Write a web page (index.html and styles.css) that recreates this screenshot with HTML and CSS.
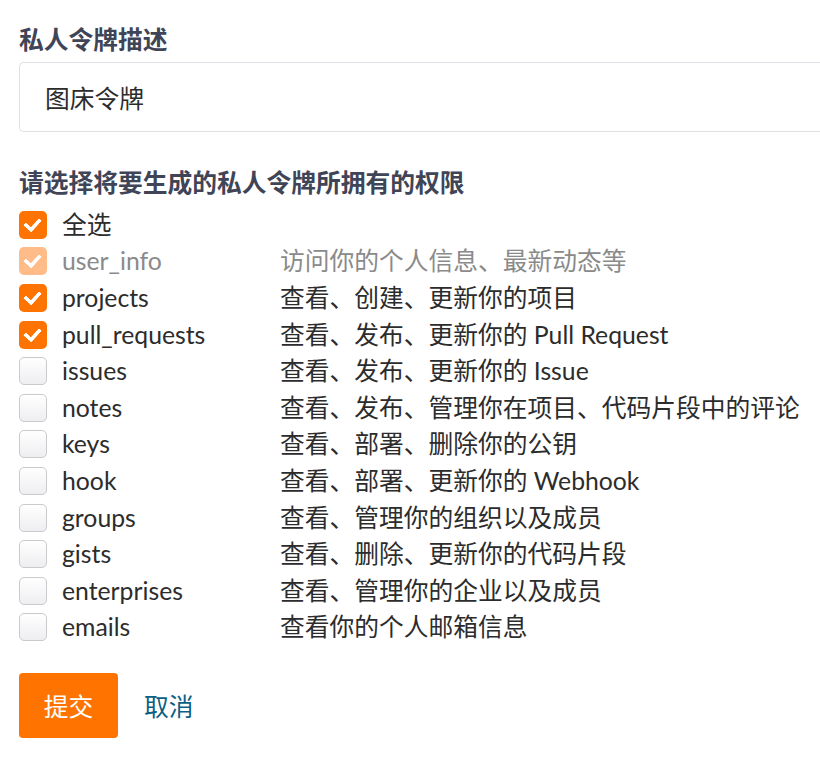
FILE: index.html
```html
<!DOCTYPE html>
<html lang="zh-CN">
<head>
<meta charset="utf-8">
<link rel="stylesheet" href="styles.css">
</head>
<body>
<form class="form">
  <label class="field-title">私人令牌描述</label>
  <input class="text-input" type="text" value="图床令牌">
  <div class="field-title second">请选择将要生成的私人令牌所拥有的权限</div>
  <div class="perm-list">
    <div class="perm-row"><span class="box checked"></span><span class="name all">全选</span></div>
    <div class="perm-row disabled"><span class="box checked"></span><span class="name">user_info</span><span class="desc">访问你的个人信息、最新动态等</span></div>
    <div class="perm-row"><span class="box checked"></span><span class="name">projects</span><span class="desc">查看、创建、更新你的项目</span></div>
    <div class="perm-row"><span class="box checked"></span><span class="name">pull_requests</span><span class="desc">查看、发布、更新你的 Pull Request</span></div>
    <div class="perm-row"><span class="box"></span><span class="name">issues</span><span class="desc">查看、发布、更新你的 Issue</span></div>
    <div class="perm-row"><span class="box"></span><span class="name">notes</span><span class="desc">查看、发布、管理你在项目、代码片段中的评论</span></div>
    <div class="perm-row"><span class="box"></span><span class="name">keys</span><span class="desc">查看、部署、删除你的公钥</span></div>
    <div class="perm-row"><span class="box"></span><span class="name">hook</span><span class="desc">查看、部署、更新你的 Webhook</span></div>
    <div class="perm-row"><span class="box"></span><span class="name">groups</span><span class="desc">查看、管理你的组织以及成员</span></div>
    <div class="perm-row"><span class="box"></span><span class="name">gists</span><span class="desc">查看、删除、更新你的代码片段</span></div>
    <div class="perm-row"><span class="box"></span><span class="name">enterprises</span><span class="desc">查看、管理你的企业以及成员</span></div>
    <div class="perm-row"><span class="box"></span><span class="name">emails</span><span class="desc">查看你的个人邮箱信息</span></div>
  </div>
  <div class="actions">
    <button type="button" class="btn-submit">提交</button>
    <a class="link-cancel">取消</a>
  </div>
</form>
</body>
</html>
```
FILE: styles.css
```css
html, body {
  margin: 0;
  padding: 0;
  background: #ffffff;
  overflow: hidden;
}
body {
  font-family: "Lato", "Noto Sans CJK SC", sans-serif;
  font-size: 24.75px;
  color: #2c2c2c;
}
.form {
  padding: 22px 0 0 19px;
  width: 780px;
}
.field-title {
  display: block;
  font-weight: 700;
  color: #3f4557;
  line-height: 36px;
  height: 36px;
}
.field-title.second {
  margin-top: 33px;
}
.text-input {
  display: block;
  box-sizing: border-box;
  margin-top: 4px;
  width: 801px;
  height: 70px;
  border: 1px solid #dfe0e6;
  border-right: none;
  border-radius: 5px 0 0 5px;
  padding: 0 25px;
  font: inherit;
  color: #2c2c2c;
  outline: none;
}
.perm-list {
  margin-top: 5.5px;
}
.perm-row {
  display: flex;
  align-items: center;
  height: 36.6px;
}
.box {
  box-sizing: border-box;
  flex: none;
  width: 28px;
  height: 28px;
  border-radius: 5px;
  border: 1px solid #c9c9ce;
  background: linear-gradient(#ffffff, #eeeef1);
  margin-right: 15px;
  position: relative;
}
.box.checked {
  border: none;
  background: #ff7400;
}
.box.checked::after {
  content: "";
  position: absolute;
  left: 8px;
  top: 4px;
  width: 7px;
  height: 12px;
  border: solid #ffffff;
  border-width: 0 4px 4px 0;
  border-radius: 1px;
  transform: rotate(42deg);
}
.perm-row.disabled .box.checked {
  background: #ffbb88;
}
.perm-row.disabled {
  color: #8a8a8a;
}
.name {
  width: 218px;
  flex: none;
  line-height: 36px;
}
.name.all {
  color: #2c2c2c;
}
.desc {
  white-space: nowrap;
  line-height: 36px;
}
.actions {
  margin-top: 27px;
  display: flex;
  align-items: center;
}
.btn-submit {
  width: 99px;
  height: 65px;
  background: #ff7400;
  color: #ffffff;
  border: none;
  border-radius: 4px;
  font: inherit;
  padding: 0;
  margin-right: 26px;
}
.link-cancel {
  color: #0b5e84;
  text-decoration: none;
}
```
